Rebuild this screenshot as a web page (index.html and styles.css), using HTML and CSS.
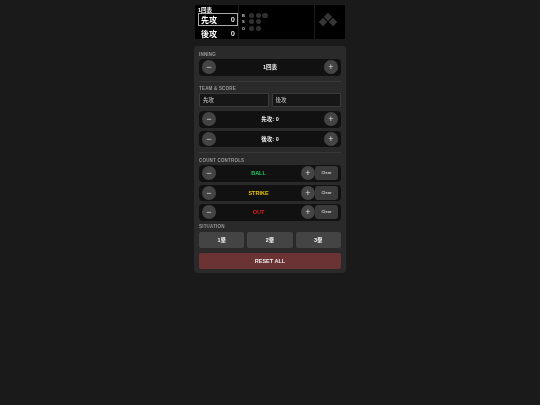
FILE: index.html
```html
<!DOCTYPE html>
<html lang="ja">
<head>
<meta charset="utf-8">
<title>Scoreboard</title>
<link rel="stylesheet" href="styles.css">
</head>
<body>
<div class="app">
  <div class="board">
    <div class="teams">
      <div class="inning-tag">1回表</div>
      <div class="team active"><span>先攻</span><b>0</b></div>
      <div class="team"><span>後攻</span><b>0</b></div>
    </div>
    <div class="counts">
      <div class="count"><i>B</i><s></s><s></s><s></s></div>
      <div class="count"><i>S</i><s></s><s></s></div>
      <div class="count"><i>O</i><s></s><s></s></div>
    </div>
    <div class="bases">
      <span class="base b2"></span><span class="base b3"></span><span class="base b1"></span>
    </div>
  </div>
  <div class="panel">
    <section class="sec">
      <h3>INNING</h3>
      <div class="row"><button class="rnd">−</button><div class="val">1回表</div><button class="rnd">+</button></div>
    </section>
    <section class="sec second">
      <h3>TEAM &amp; SCORE</h3>
      <div class="inputs"><input value="先攻"><input value="後攻"></div>
      <div class="row"><button class="rnd">−</button><div class="val">先攻: 0</div><button class="rnd">+</button></div>
      <div class="row"><button class="rnd">−</button><div class="val">後攻: 0</div><button class="rnd">+</button></div>
    </section>
    <section class="sec last">
      <h3>COUNT CONTROLS</h3>
      <div class="row"><button class="rnd">−</button><div class="val ball">BALL</div><button class="rnd">+</button><button class="clear">Clear</button></div>
      <div class="row"><button class="rnd">−</button><div class="val strike">STRIKE</div><button class="rnd">+</button><button class="clear">Clear</button></div>
      <div class="row"><button class="rnd">−</button><div class="val out">OUT</div><button class="rnd">+</button><button class="clear">Clear</button></div>
      <h3 class="sit">SITUATION</h3>
      <div class="basebtns"><button>1塁</button><button>2塁</button><button>3塁</button></div>
      <button class="reset">RESET ALL</button>
    </section>
  </div>
</div>
</body>
</html>
```
FILE: styles.css
```css
* { box-sizing: border-box; }
html, body { margin: 0; height: 100%; }
body {
  background: #1a1a1a;
  color: #eee;
  font-family: "Liberation Sans", "Noto Sans CJK JP", sans-serif;
}
.app { width: 152px; margin: 0 auto; padding-top: 5px; filter: blur(.3px); }
.board {
  width: 150px; height: 34px; margin: 0 auto 7px;
  background: #000;
  display: flex;
}
.teams { width: 43.5px; padding: 2px 0 0 3px; border-right: 1px solid #1c1c1c; }
.inning-tag { font-size: 5.5px; line-height: 6px; font-weight: 700; color: #fff; }
.team {
  width: 39.5px; height: 13px; padding: 0 1.5px 0 2px;
  display: flex; align-items: center; justify-content: space-between;
  font-size: 8px; font-weight: 700; color: #fff; border: 1px solid transparent;
}
.team b { font-size: 7.5px; font-weight: 700; color: #ddd; }
.team.active { border-color: #aaa; }
.team + .team { margin-top: 1px; }
.counts { width: 76px; padding: 8px 0 0 3.5px; display: flex; flex-direction: column; gap: 1.3px; border-right: 1px solid #1c1c1c; }
.count { display: flex; align-items: center; height: 5px; gap: 1.5px; }
.count i { font: 700 4px/5px "Liberation Sans", sans-serif; width: 4.5px; color: #ccc; margin-right: 1px; }
.count s { width: 5.2px; height: 5.2px; border-radius: 50%; background: #303030; }
.bases { position: relative; flex: 1; }
.base { position: absolute; width: 6px; height: 6px; background: #363636; transform: rotate(45deg); }
.b2 { left: 10px; top: 9px; }
.b3 { left: 5px; top: 14px; }
.b1 { left: 15px; top: 14px; }
.panel {
  background: #2a2a2a; border-radius: 4px; padding: 5px;
  height: 227px;
}
.sec { padding-bottom: 5.5px; margin-bottom: 3px; border-bottom: 1px solid #383838; }
.sec.second { padding-bottom: 5px; margin-bottom: 4px; }
.sec.last { border-bottom: 0; margin: 0; padding: 0; }
h3 { margin: 0 0 2.5px; padding-top: .5px; font-size: 4.5px; line-height: 5px; font-weight: 700; letter-spacing: .2px; color: #999; }
.sit { margin: 2px 0 3px; }
.row {
  height: 16.5px; background: #111; border-radius: 4px;
  display: flex; align-items: center; padding: 0 3px;
  margin-bottom: 3px;
}
.sec .row:last-child { margin-bottom: 0; }
.rnd {
  width: 14px; height: 14px; border-radius: 50%; border: 0; padding: 0;
  background: #444; color: #ddd; font: 400 9px/14px "Liberation Sans", sans-serif;
  flex: none;
}
.val { flex: 1; text-align: center; font-size: 5.5px; font-weight: 700; color: #eee; }
.ball { color: #1ecb63; }
.strike { color: #e6c200; }
.out { color: #e01b1b; }
.clear {
  width: 23px; height: 14px; border: 0; border-radius: 3px; padding: 0; flex: none;
  background: #3a3a3a; color: #ccc; font: 700 4px/14px "Liberation Sans", sans-serif;
}
.inputs { display: flex; gap: 3px; margin-bottom: 4px; }
.inputs input {
  flex: 1; min-width: 0; height: 14px; padding: 0 3px;
  background: #161616; border: 1px solid #3a3a3a; border-radius: 1px;
  color: #ccc; font: 5.5px "Liberation Sans", "Noto Sans CJK JP", sans-serif;
}
.basebtns { display: flex; gap: 3px; margin-bottom: 5px; }
.basebtns button {
  flex: 1; height: 16px; border: 0; border-radius: 2px; padding: 0;
  background: #444; color: #eee; font: 700 5.5px "Liberation Sans", "Noto Sans CJK JP", sans-serif;
}
.reset {
  display: block; width: 100%; height: 16px; border: 0; border-radius: 2px; padding: 0;
  background: #6b3333; color: #eee; font: 700 5.5px "Liberation Sans", sans-serif;
}
```
